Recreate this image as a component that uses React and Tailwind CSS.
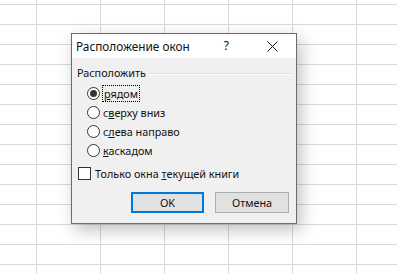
const cols = [37, 64, 64, 64, 64, 64, 64];
const rows = [5, 20, 20, 20, 20, 20, 20, 20, 20, 20, 20, 20, 20, 20, 20];

function Sheet() {
  return (
    <div className="flex flex-col">
      {rows.map((h, r) => (
        <div key={r} className="flex" style={{ height: h }}>
          {cols.map((w, c) => (
            <div
              key={c}
              className="shrink-0 border-r border-b border-[#d9d9d9] bg-white"
              style={{ width: w }}
            />
          ))}
        </div>
      ))}
    </div>
  );
}

function Radio({ checked, children }) {
  return (
    <div className="flex h-[19px] items-center">
      <span className="flex h-[13px] w-[13px] shrink-0 items-center justify-center rounded-full border border-[#333] bg-white">
        {checked && <span className="h-[7px] w-[7px] rounded-full bg-[#333]" />}
      </span>
      <span className="ml-[3px]">{children}</span>
    </div>
  );
}

export default function App() {
  return (
    <div className="relative h-[274px] w-[397px] overflow-hidden bg-white font-['Noto_Sans',sans-serif] text-[10.8px] leading-[16px] text-[#111]">
      <Sheet />

      <div className="absolute left-[71px] top-[33px] flex h-[191px] w-[226px] flex-col border border-[#6b6b6b] bg-[#f0f0f0] shadow-[4px_6px_16px_rgba(0,0,0,0.25)]">
        <div className="flex h-[24px] items-center bg-white pl-[4px]">
          <span className="text-[11.8px]">Расположение окон</span>
          <span className="ml-auto mr-[38px] text-[12px]">?</span>
          <svg width="11" height="11" viewBox="0 0 11 11" className="mr-[18px]">
            <path d="M0.5 0.5 L10.5 10.5 M10.5 0.5 L0.5 10.5" stroke="#111" strokeWidth="1" />
          </svg>
        </div>

        <div className="flex flex-1 flex-col px-[5px]">
          <div className="mt-[7px] flex items-center">
            <span>Расположить</span>
            <span className="ml-[3px] mt-[1px] h-[2px] flex-1 border-t border-b border-t-[#dcdcdc] border-b-white" />
          </div>

          <div className="ml-[10px] mt-[3px] flex flex-col">
            <Radio checked>
              <span className="px-[1px] outline outline-1 outline-dotted outline-black">
                <span className="underline">р</span>ядом
              </span>
            </Radio>
            <Radio>
              с<span className="underline">в</span>ерху вниз
            </Radio>
            <Radio>
              с<span className="underline">л</span>ева направо
            </Radio>
            <Radio>
              <span className="underline">к</span>аскадом
            </Radio>
          </div>

          <div className="ml-[1px] mt-[4px] flex h-[19px] items-center">
            <span className="h-[13px] w-[13px] shrink-0 border border-[#333] bg-white" />
            <span className="ml-[4px]">
              Только окна <span className="underline">т</span>екущей книги
            </span>
          </div>

          <div className="mr-[2px] mt-[9px] flex justify-end gap-[11px]">
            <button className="h-[21px] w-[73px] border-2 border-[#0078d7] bg-[#e1e1e1]">OK</button>
            <button className="h-[21px] w-[74px] border border-[#adadad] bg-[#e1e1e1]">Отмена</button>
          </div>
        </div>
      </div>
    </div>
  );
}
